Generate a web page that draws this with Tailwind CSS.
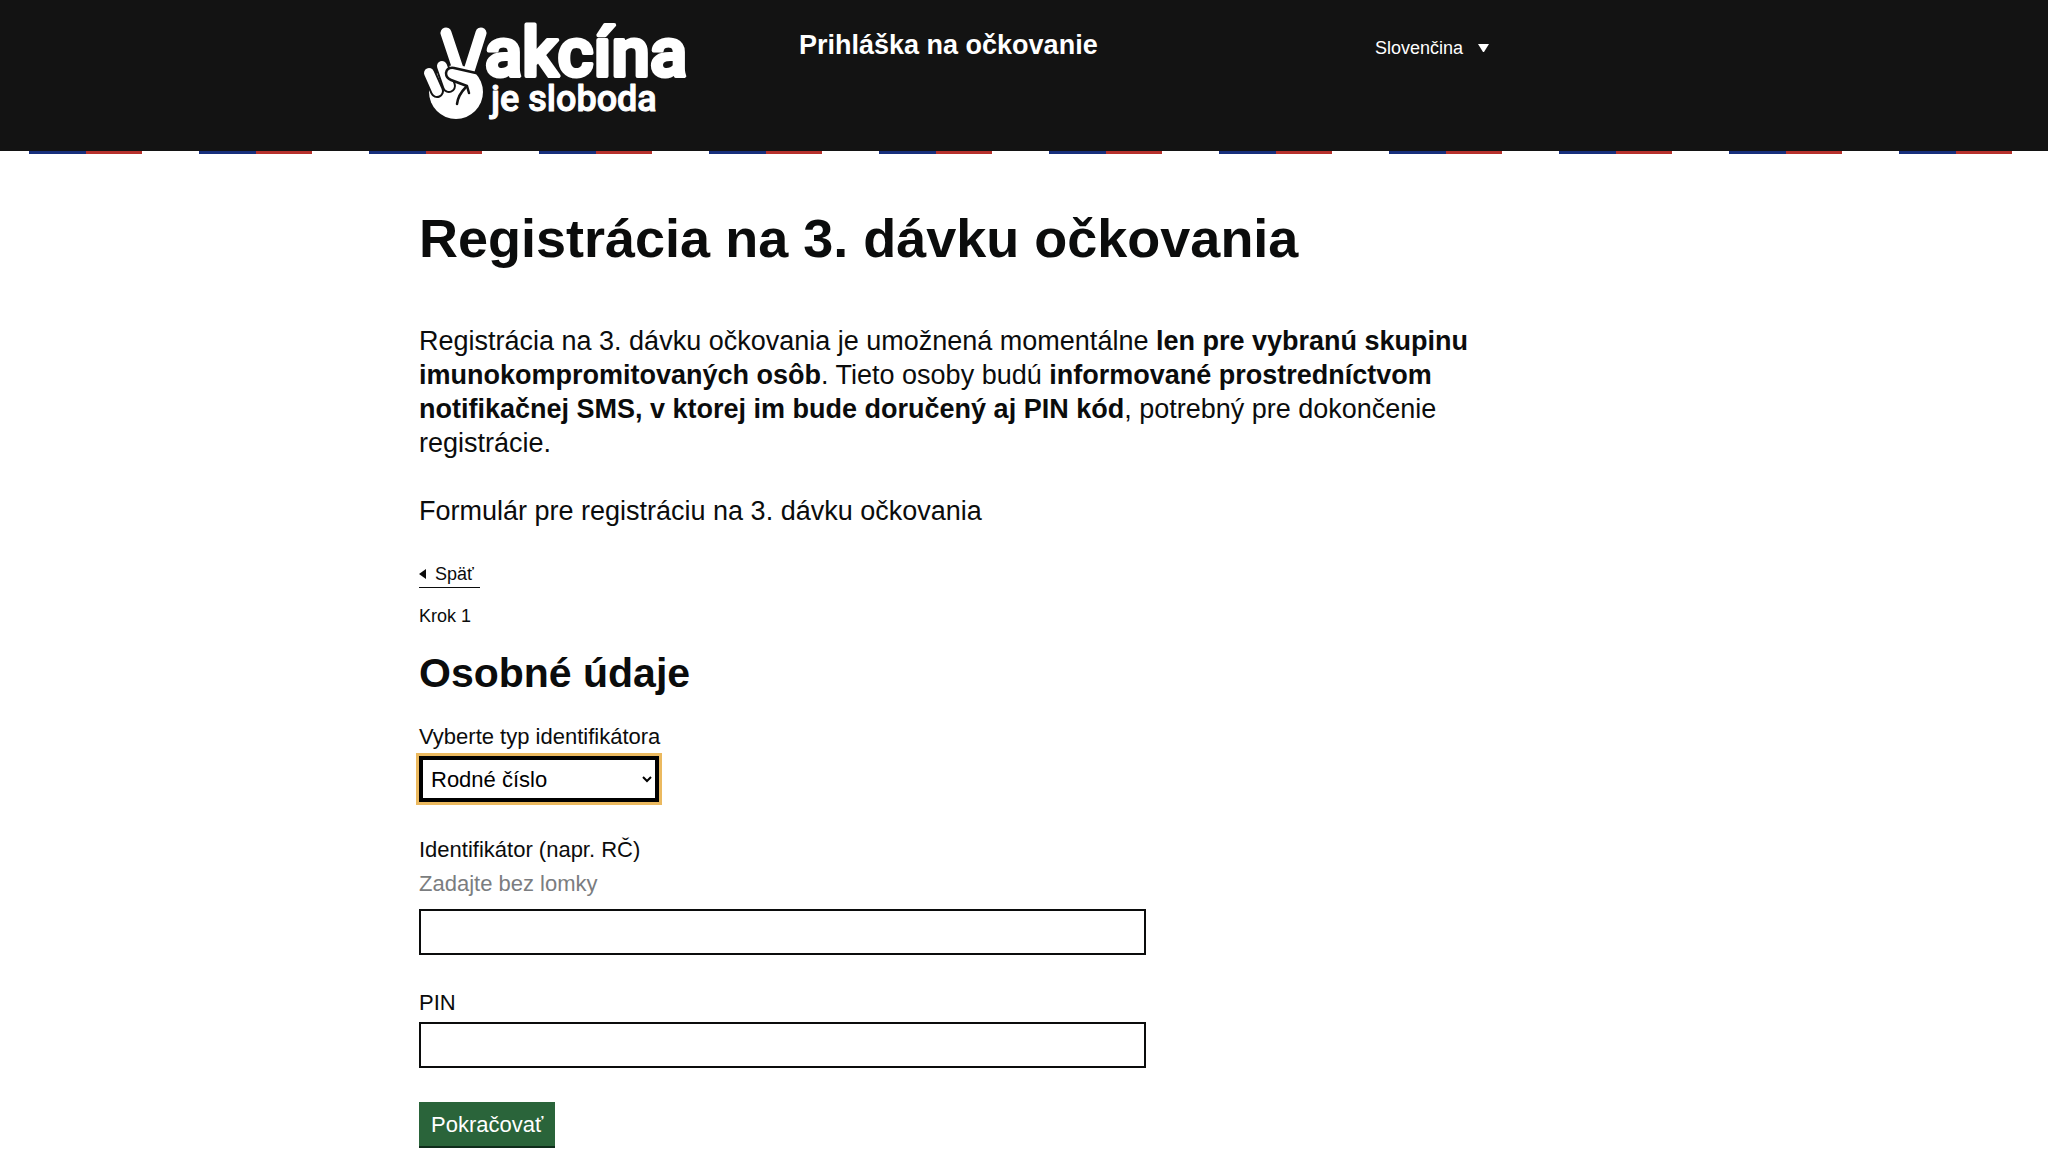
<!DOCTYPE html>
<html lang="sk">
<head>
    <meta charset="UTF-8">
    <meta name="viewport" content="width=device-width, initial-scale=1.0">
    <title>Registrácia na 3. dávku očkovania</title>
    <script src="https://cdn.jsdelivr.net/npm/@tailwindcss/browser@4"></script>
</head>
<body class="bg-white text-[#0b0c0c] font-['Liberation_Sans',Arial,sans-serif]">

    <!-- Header -->
    <header>
        <div class="bg-[#131313] text-white pr-[120px]">
            <div class="mx-auto flex h-[151px] max-w-[1090px] items-start">
                <a href="#" class="w-[380px] shrink-0" aria-label="Vakcína je sloboda">
                    <svg width="280" height="130" viewBox="419 0 280 130" fill="#fff">
                        <!-- Hand -->
                        <circle cx="456" cy="92" r="27"/>
                        <path d="M446 33L459 72M481 33L468 74" stroke="#fff" stroke-width="11" stroke-linecap="round"/>
                        <g stroke-linecap="round" stroke-linejoin="round">
                            <path d="M442 66L449 86" stroke="#131313" stroke-width="14"/>
                            <path d="M442 66L449 86" stroke="#fff" stroke-width="10"/>
                            <path d="M429 73L437 91" stroke="#131313" stroke-width="14"/>
                            <path d="M429 73L437 91" stroke="#fff" stroke-width="10"/>
                            <path d="M476 73L454 68Q447 67 446 73Q446 78 451 80L467 86L469 93" stroke="#131313" stroke-width="2.5"/>
                            <path d="M457 104Q458 95 466 87" fill="none" stroke="#131313" stroke-width="2.5"/>
                        </g>
                        <!-- Wordmark -->
                        <g stroke="#fff" stroke-linejoin="round" font-family="Roboto, sans-serif" font-weight="500">
                            <text x="485" y="76" font-size="69" stroke-width="4">akcína</text>
                            <text x="491" y="111" font-size="36" stroke-width="1">je sloboda</text>
                        </g>
                    </svg>
                </a>
                <p class="pt-7 text-[27px] leading-[34px] font-bold">Prihláška na očkovanie</p>
                <button type="button" class="mt-9 ml-auto mr-5 flex items-center gap-[15px] text-lg leading-6">
                    Slovenčina
                    <svg width="11" height="8" viewBox="0 0 11 8" fill="currentColor" aria-hidden="true"><path d="M0 0H11L6 8H5Z"/></svg>
                </button>
            </div>
        </div>
        <div class="h-[3px] bg-[repeating-linear-gradient(90deg,#fff_0px,#fff_29px,#172f7c_29px,#172f7c_86px,#b7312c_86px,#b7312c_142px,#fff_142px,#fff_170px)]"></div>
    </header>

    <!-- Content -->
    <div class="pr-[120px]">
        <main class="mx-auto max-w-[1090px] pt-14">
            <h1 class="text-[54px] leading-[56px] font-bold">Registrácia na 3. dávku očkovania</h1>

            <div class="mt-[58px] text-[27px] leading-[34px]">
                <p>
                    Registrácia na 3. dávku očkovania je umožnená momentálne <b>len pre vybranú skupinu imunokompromitovaných osôb</b>.
                    Tieto osoby budú <b>informované prostredníctvom notifikačnej SMS, v ktorej im bude doručený aj PIN kód</b>,
                    potrebný pre dokončenie registrácie.
                </p>
                <p class="mt-[34px]">Formulár pre registráciu na 3. dávku očkovania</p>
            </div>

            <a href="#" class="mt-9 flex w-fit items-center gap-[9px] border-b border-[#0b0c0c] pr-[6px] pb-[3px] text-lg leading-5">
                <svg width="7" height="10" viewBox="0 0 7 10" fill="currentColor" aria-hidden="true"><path d="M7 0V10L0 5Z"/></svg>
                Späť
            </a>

            <form>
                <p class="mt-[14px] text-lg leading-7">Krok 1</p>
                <h2 class="mt-[21px] text-[41px] leading-[44px] font-bold">Osobné údaje</h2>

                <div class="mt-7">
                    <label for="id-type" class="block text-[22px] leading-7">Vyberte typ identifikátora</label>
                    <select id="id-type" class="mt-[5px] block h-[46px] w-60 border-4 border-black bg-white px-1 text-[22px] text-black outline-3 outline-[#ebb95f]">
                        <option>Rodné číslo</option>
                    </select>
                </div>

                <div class="mt-[34px]">
                    <label for="identifier" class="block text-[22px] leading-7">Identifikátor (napr. RČ)</label>
                    <p id="identifier-hint" class="mt-[6px] text-[22px] leading-7 text-[#7b7d80]">Zadajte bez lomky</p>
                    <input id="identifier" type="text" aria-describedby="identifier-hint" class="mt-[11px] block h-[46px] w-2/3 border-2 border-[#0b0c0c] px-2 text-[22px]">
                </div>

                <div class="mt-[34px]">
                    <label for="pin" class="block text-[22px] leading-7">PIN</label>
                    <input id="pin" type="text" class="mt-[5px] block h-[46px] w-2/3 border-2 border-[#0b0c0c] px-2 text-[22px]">
                </div>

                <button type="submit" class="mt-[34px] block h-[46px] border-b-2 border-[#0f2d1b] bg-[#2a643a] px-3 text-[22px] text-white">Pokračovať</button>
            </form>
        </main>
    </div>
</body>
</html>
